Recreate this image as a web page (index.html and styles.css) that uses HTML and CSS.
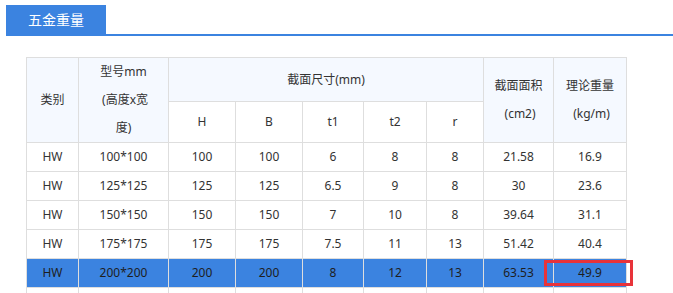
FILE: index.html
```html
<!DOCTYPE html>
<html lang="zh">
<head>
<meta charset="utf-8">
<title>五金重量</title>
<link rel="stylesheet" href="styles.css">
</head>
<body>
<div class="tabbar">
  <div class="tab">五金重量</div>
</div>
<div class="wrap">
  <table class="spec">
    <colgroup>
      <col class="c52"><col class="c90"><col class="c67"><col class="c67"><col class="c61"><col class="c63"><col class="c57"><col class="c70"><col class="c73">
    </colgroup>
    <thead>
      <tr class="h1">
        <th rowspan="2">类别</th>
        <th rowspan="2" class="model">型号mm<br>&nbsp;(高度x宽度)</th>
        <th colspan="5">截面尺寸(mm)</th>
        <th rowspan="2">截面面积<br>&nbsp;(cm2)</th>
        <th rowspan="2">理论重量<br>&nbsp;(kg/m)</th>
      </tr>
      <tr class="h2">
        <th class="sub">H</th><th class="sub">B</th><th class="sub">t1</th><th class="sub">t2</th><th class="sub">r</th>
      </tr>
    </thead>
    <tbody>
      <tr><td>HW</td><td>100*100</td><td>100</td><td>100</td><td>6</td><td>8</td><td>8</td><td>21.58</td><td>16.9</td></tr>
      <tr><td>HW</td><td>125*125</td><td>125</td><td>125</td><td>6.5</td><td>9</td><td>8</td><td>30</td><td>23.6</td></tr>
      <tr><td>HW</td><td>150*150</td><td>150</td><td>150</td><td>7</td><td>10</td><td>8</td><td>39.64</td><td>31.1</td></tr>
      <tr><td>HW</td><td>175*175</td><td>175</td><td>175</td><td>7.5</td><td>11</td><td>13</td><td>51.42</td><td>40.4</td></tr>
      <tr class="active"><td>HW</td><td>200*200</td><td>200</td><td>200</td><td>8</td><td>12</td><td>13</td><td>63.53</td><td>49.9</td></tr>
      <tr><td></td><td></td><td></td><td></td><td></td><td></td><td></td><td></td><td></td></tr>
    </tbody>
  </table>
  <div class="mark"></div>
</div>
</body>
</html>
```
FILE: styles.css
```css
html, body {
  margin: 0;
  padding: 0;
  background: #ffffff;
}
body {
  font-family: "Noto Sans", "Noto Sans CJK SC", sans-serif;
  color: #333333;
}
.tabbar {
  margin-left: 6px;
  padding-top: 5px;
  border-bottom: 2px solid #3b83e0;
  display: flex;
}
.tab {
  width: 100px;
  height: 29px;
  background: #3b83e0;
  color: #ffffff;
  font-family: "Noto Sans CJK SC", sans-serif;
  font-size: 14px;
  line-height: 29px;
  text-align: center;
}
.wrap {
  position: relative;
  margin: 21px 0 0 26px;
  width: 601px;
}
.spec {
  border-collapse: collapse;
  table-layout: fixed;
  width: 601px;
  font-size: 12px;
}
.c52 { width: 52px; }
.c90 { width: 90px; }
.c67 { width: 67px; }
.c61 { width: 61px; }
.c63 { width: 63px; }
.c57 { width: 57px; }
.c70 { width: 70px; }
.c73 { width: 73px; }
.spec th, .spec td {
  border: 1px solid #dedede;
  padding: 0 6px;
  text-align: center;
  vertical-align: middle;
  line-height: 28px;
  font-weight: normal;
}
.spec th {
  background: #f5f9ff;
}
.spec th.model {
  padding: 0 17px;
}
.spec .h1 th { height: 43px; }
.spec .h2 th { height: 40px; }
.spec th.sub { background: #ffffff; }
.spec td { height: 28px; }
.spec tr.active td {
  background: #3b83e0;
  color: #1e1e1e;
}
.mark {
  position: absolute;
  left: 518px;
  top: 203px;
  width: 89px;
  height: 26px;
  box-sizing: border-box;
  border: 3px solid #e8333a;
}
```
